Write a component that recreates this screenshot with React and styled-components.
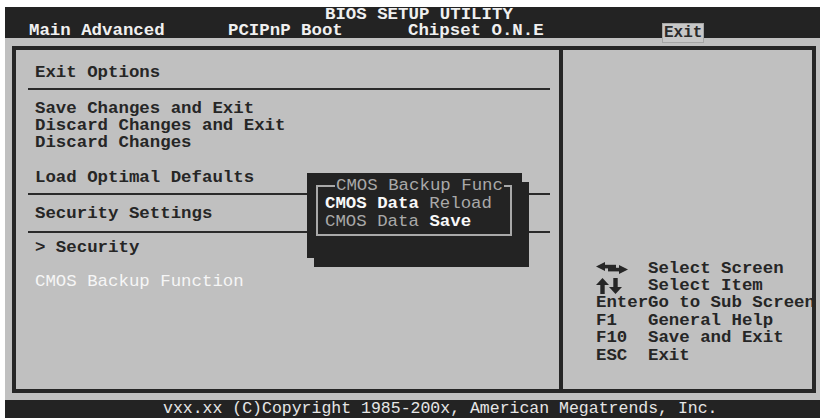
import styled, { createGlobalStyle } from "styled-components";

const mono = `"Liberation Mono", "DejaVu Sans Mono", monospace`;

const GlobalStyle = createGlobalStyle`
  html, body {
    margin: 0;
    padding: 0;
    background: #ffffff;
  }
  body {
    font-family: ${mono};
  }
`;

const Screen = styled.div`
  width: 815px;
  height: 411px;
  margin: 7px 0 0 5px;
  display: flex;
  flex-direction: column;
  font-family: ${mono};
  font-size: 17.4px;
  font-weight: bold;
`;

const TopBar = styled.div`
  height: 31px;
  background: #232323;
  color: #f0f0f0;
  display: flex;
  flex-direction: column;
`;

const Title = styled.div`
  height: 14px;
  line-height: 16px;
  padding-left: 320px;
  white-space: pre;
`;

const TabRow = styled.div`
  display: flex;
  align-items: flex-start;
  padding-left: 24px;
  height: 17px;
`;

const Tab = styled.div`
  width: ${(p) => p.w}px;
  line-height: 20px;
  white-space: pre;
  flex: none;
  ${(p) =>
    p.active &&
    `
    position: relative;
    z-index: 1;
    margin-top: 2px;
    height: 20px;
    line-height: 21px;
    padding-left: 2px;
    box-sizing: border-box;
    font-size: 16px;
    background: #c7c7c7;
    color: #2a2a2a;
    box-shadow: inset 0 0 0 1px #a5a5a5;
  `}
`;

const Main = styled.div`
  flex: 1;
  background: #c0c0c0;
  padding: 8px 4px 7px 7px;
  display: flex;
`;

const Frame = styled.div`
  flex: 1;
  border: 4px solid #262626;
  display: grid;
  grid-template-columns: 543px 1fr;
  overflow: hidden;
`;

const LeftPanel = styled.div`
  position: relative;
  display: flex;
  flex-direction: column;
  color: #262626;
`;

const RightPanel = styled.div`
  border-left: 4px solid #262626;
  display: flex;
  flex-direction: column;
  justify-content: flex-end;
  padding: 0 0 25px 33px;
  overflow: hidden;
  color: #262626;
`;

const Line = styled.div`
  margin-top: ${(p) => p.mt}px;
  padding-left: 19px;
  line-height: 17px;
  white-space: pre;
  color: ${(p) => (p.light ? "#f6f6f6" : "inherit")};
  font-weight: ${(p) => (p.light ? "normal" : "bold")};
`;

const Rule = styled.div`
  margin: ${(p) => p.mt}px 9px 0 12px;
  height: 2px;
  background: #2a2a2a;
`;

const Popup = styled.div`
  position: absolute;
  left: 291px;
  top: 123px;
  width: 215px;
  height: 85px;
  box-sizing: border-box;
  padding: 12px 10px 0 9px;
  background: #232323;
  box-shadow: 7px 9px 0 #232323;
  z-index: 2;
`;

const PopupFrame = styled.div`
  position: relative;
  height: 51px;
  box-sizing: border-box;
  border: 2px solid #a9a9a9;
  padding: 7.5px 0 0 7px;
`;

const PopupTitle = styled.div`
  position: absolute;
  top: -10.5px;
  left: 17px;
  padding: 0 1px;
  line-height: 17px;
  background: #232323;
  color: #a9a9a9;
  font-weight: normal;
  white-space: pre;
`;

const PopupItem = styled.div`
  line-height: 18.5px;
  white-space: pre;
  color: #a9a9a9;
  font-weight: normal;
`;

const Hi = styled.span`
  color: #f8f8f8;
  font-weight: bold;
`;

const HelpRow = styled.div`
  display: grid;
  grid-template-columns: 52px auto;
  height: 17.4px;
  line-height: 17.4px;
  white-space: pre;
  align-items: center;
`;

const Key = styled.div`
  display: flex;
  align-items: center;
  height: 100%;
`;

const Footer = styled.div`
  height: 18px;
  line-height: 18px;
  background: #232323;
  color: #e6e6e6;
  font-size: 16.5px;
  font-weight: normal;
  padding-left: 158px;
  white-space: pre;
`;

const LeftRightIcon = () => (
  <svg width="32" height="12" viewBox="0 0 32 12">
    <polygon points="0,4.5 9,0 9,9" fill="#262626" />
    <rect x="8" y="2.8" width="12" height="3.6" fill="#262626" />
    <polygon points="32,7.5 23,3 23,12" fill="#262626" />
    <rect x="12" y="5.8" width="12" height="3.6" fill="#262626" />
  </svg>
);

const UpDownIcon = () => (
  <svg width="26" height="16" viewBox="0 0 26 16">
    <polygon points="0,7 6.5,0 13,7" fill="#262626" />
    <rect x="4.3" y="6" width="4.4" height="10" fill="#262626" />
    <polygon points="13,9 19.5,16 26,9" fill="#262626" />
    <rect x="17.3" y="0" width="4.4" height="10" fill="#262626" />
  </svg>
);

const help = [
  { key: <LeftRightIcon />, text: "Select Screen" },
  { key: <UpDownIcon />, text: "Select Item" },
  { key: "Enter", text: "Go to Sub Screen" },
  { key: "F1", text: "General Help" },
  { key: "F10", text: "Save and Exit" },
  { key: "ESC", text: "Exit" },
];

const App = () => {
  return (
    <>
      <GlobalStyle />
      <Screen>
        <TopBar>
          <Title>BIOS SETUP UTILITY</Title>
          <TabRow>
            <Tab w={199}>Main Advanced</Tab>
            <Tab w={180}>PCIPnP Boot</Tab>
            <Tab w={254}>Chipset O.N.E</Tab>
            <Tab w={42} active>
              Exit
            </Tab>
          </TabRow>
        </TopBar>
        <Main>
          <Frame>
            <LeftPanel>
              <Line mt={13.5}>Exit Options</Line>
              <Rule mt={7.5} />
              <Line mt={9.5}>Save Changes and Exit</Line>
              <Line mt={0}>Discard Changes and Exit</Line>
              <Line mt={0}>Discard Changes</Line>
              <Line mt={18}>Load Optimal Defaults</Line>
              <Rule mt={7.5} />
              <Line mt={9.5}>Security Settings</Line>
              <Rule mt={9.5} />
              <Line mt={5.5}>{"> Security"}</Line>
              <Line mt={17} light>
                CMOS Backup Function
              </Line>
              <Popup>
                <PopupFrame>
                  <PopupTitle>CMOS Backup Func</PopupTitle>
                  <PopupItem>
                    <Hi>CMOS Data</Hi> Reload
                  </PopupItem>
                  <PopupItem>
                    CMOS Data <Hi>Save</Hi>
                  </PopupItem>
                </PopupFrame>
              </Popup>
            </LeftPanel>
            <RightPanel>
              {help.map((h, i) => (
                <HelpRow key={i}>
                  <Key>{h.key}</Key>
                  <div>{h.text}</div>
                </HelpRow>
              ))}
            </RightPanel>
          </Frame>
        </Main>
        <Footer>vxx.xx (C)Copyright 1985-200x, American Megatrends, Inc.</Footer>
      </Screen>
    </>
  );
};

export default App;
